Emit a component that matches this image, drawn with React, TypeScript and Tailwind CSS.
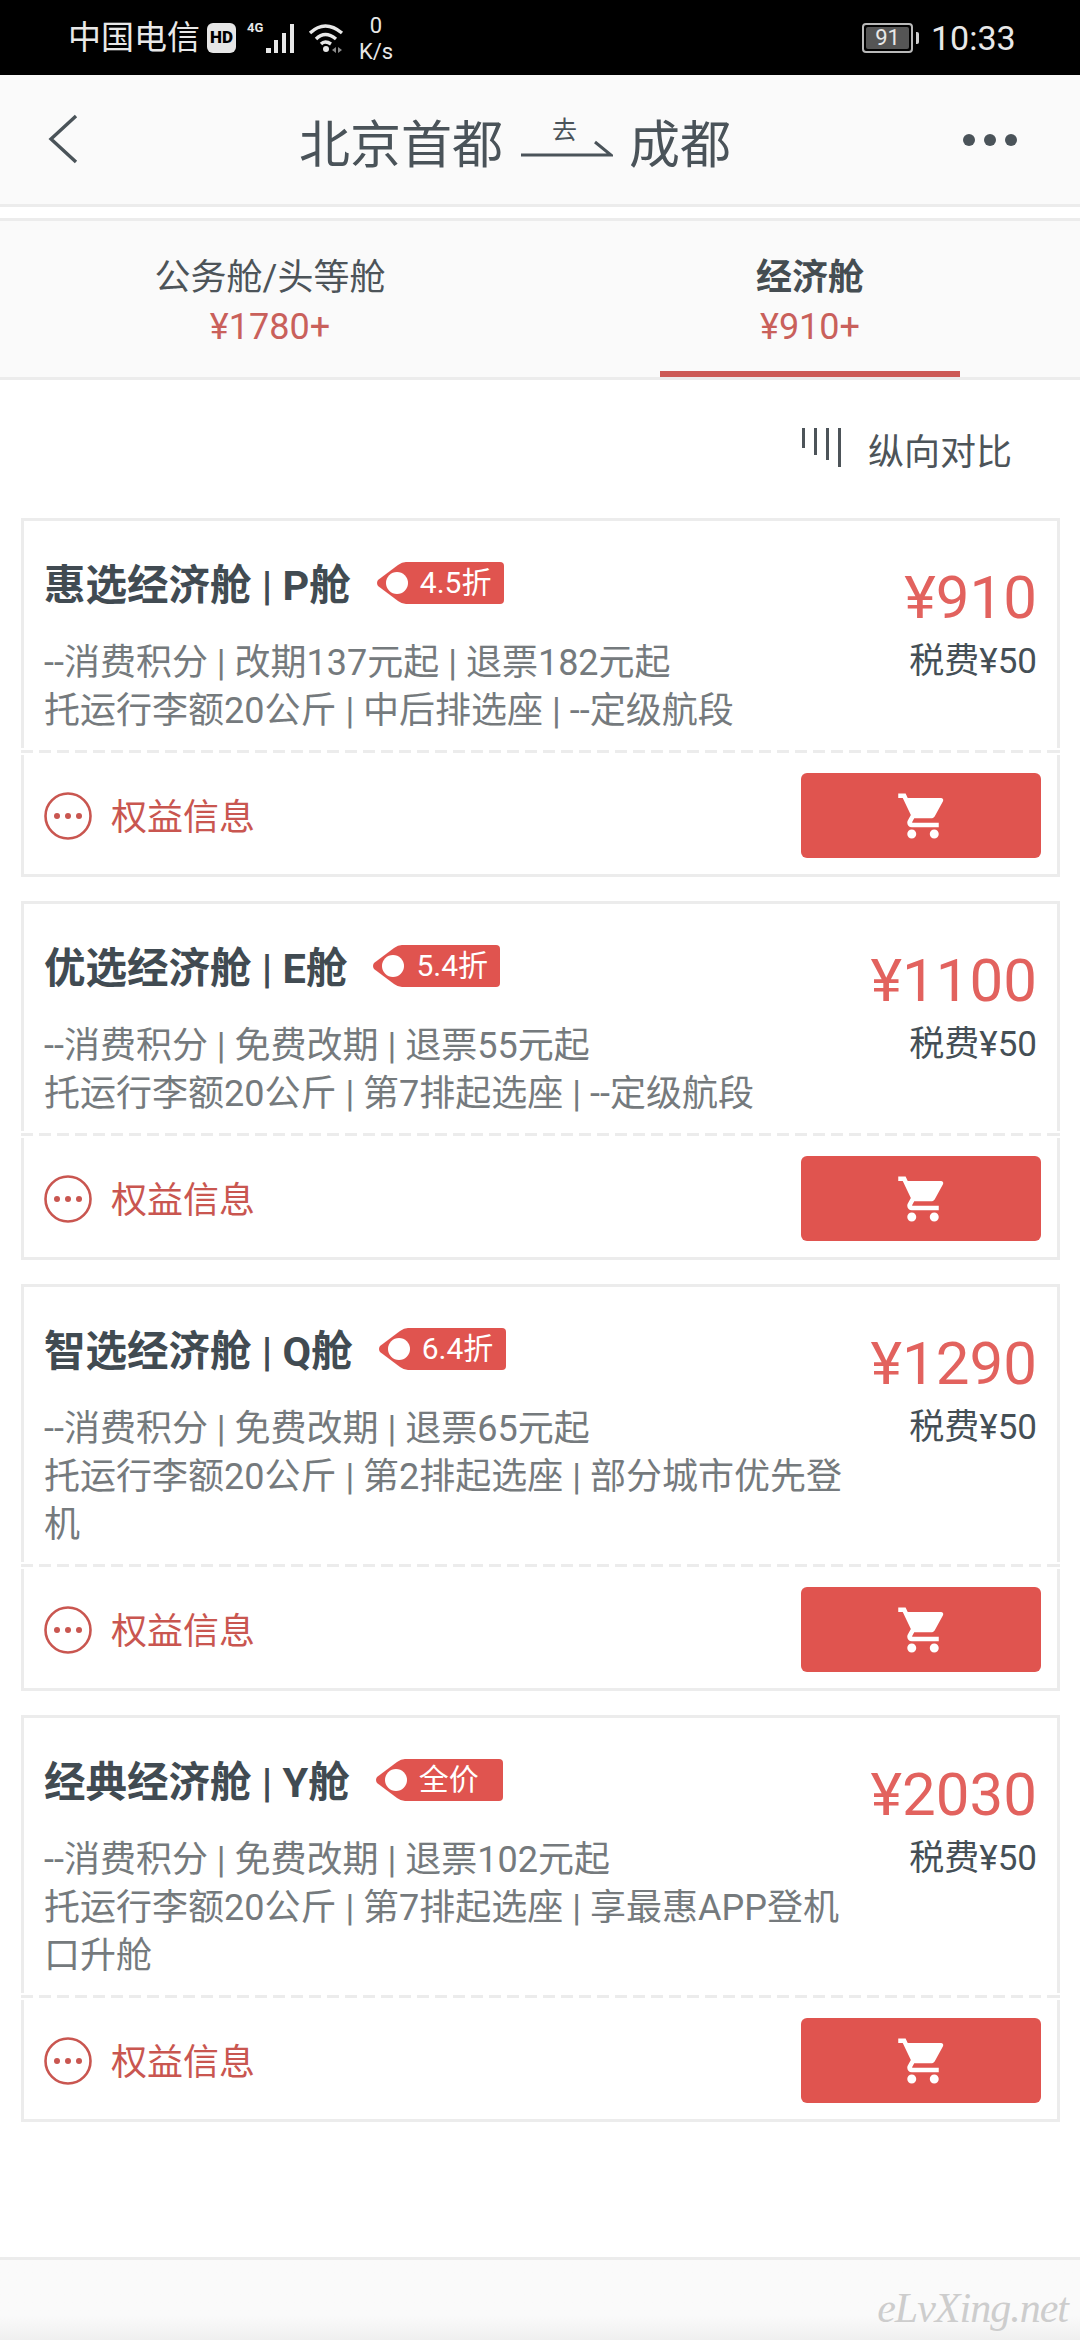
import { MdShoppingCart } from "react-icons/md";

type Cabin = {
  title: string;
  tag: string;
  price: string;
  lines: string;
};

const cabins: Cabin[] = [
  {
    title: "惠选经济舱 | P舱",
    tag: "4.5折",
    price: "¥910",
    lines: "--消费积分 | 改期137元起 | 退票182元起\n托运行李额20公斤 | 中后排选座 | --定级航段",
  },
  {
    title: "优选经济舱 | E舱",
    tag: "5.4折",
    price: "¥1100",
    lines: "--消费积分 | 免费改期 | 退票55元起\n托运行李额20公斤 | 第7排起选座 | --定级航段",
  },
  {
    title: "智选经济舱 | Q舱",
    tag: "6.4折",
    price: "¥1290",
    lines: "--消费积分 | 免费改期 | 退票65元起\n托运行李额20公斤 | 第2排起选座 | 部分城市优先登机",
  },
  {
    title: "经典经济舱 | Y舱",
    tag: "全价",
    price: "¥2030",
    lines: "--消费积分 | 免费改期 | 退票102元起\n托运行李额20公斤 | 第7排起选座 | 享最惠APP登机口升舱",
  },
];

function StatusBar() {
  return (
    <div className="flex h-[75px] shrink-0 items-center bg-black pl-[68px] text-[#e8e8e8]">
      <span className="text-[33px] leading-none">中国电信</span>
      <span className="ml-[7px] flex h-[30px] w-[29px] items-center justify-center rounded-[6px] bg-[#e6e6e6] text-[17px] font-black leading-none text-black">
        HD
      </span>
      {/* 4G + sinal */}
      <div className="relative ml-[11px] h-[30px] w-[52px]">
        <span className="absolute -top-[2px] left-0 text-[13px] font-bold leading-none">4G</span>
        <svg width="52" height="30" viewBox="0 0 52 30" fill="#e8e8e8">
          <rect x="19" y="25" width="5" height="5" />
          <rect x="27" y="17" width="4" height="13" />
          <rect x="35" y="10" width="4" height="20" />
          <rect x="43" y="1" width="4" height="29" />
        </svg>
      </div>
      {/* wifi */}
      <svg className="ml-[9px]" width="38" height="32" viewBox="0 0 38 32" fill="none" stroke="#e8e8e8" strokeWidth="3.4">
        <path d="M2 11 Q17 -3 34 11" />
        <path d="M8 17 Q17 8 28 17" />
        <path d="M13 22 Q17 18 23 22" />
        <circle cx="18" cy="27" r="3" fill="#e8e8e8" stroke="none" />
        <path d="M28 25 L24 28 L28 31 Z M30 25 L34 28 L30 31 Z" fill="#8a8a8a" stroke="none" />
      </svg>
      <div className="ml-[14px] flex w-[32px] flex-col items-center text-[22px] leading-[24px]">
        <span className="mt-[2px]">0</span>
        <span className="mt-[2px]">K/s</span>
      </div>
      {/* bateria */}
      <div className="ml-[470px] flex h-[30px] w-[51px] items-center justify-center rounded-[4px] border-2 border-[#b9b9b9] p-[2px]">
        <span className="flex h-full w-full items-center justify-center rounded-[2px] bg-[#555555] text-[22px] leading-none">
          91
        </span>
      </div>
      <span className="ml-[3px] h-[12px] w-[3px] rounded-r-[2px] bg-[#cfcfcf]" />
      <span className="ml-[12px] text-[34px] leading-none">10:33</span>
    </div>
  );
}

function Header() {
  return (
    <div className="flex h-[132px] shrink-0 items-center border-b-[3px] border-[#ececec] bg-[#fafafa] pl-[48px] pr-[63px] text-[#4a5359]">
      <svg className="mt-[-1px]" width="30" height="50" viewBox="0 0 30 50" fill="none" stroke="#4a5359" strokeWidth="3.4">
        <path d="M28 2 L3 25 L28 48" />
      </svg>
      <span className="ml-[221px] mt-[12px] text-[51px] leading-none">北京首都</span>
      {/* seta com o "去" em cima */}
      <div className="relative ml-[18px] mt-[3px] h-[36px] w-[92px]">
        <span className="absolute left-[31px] -top-[5px] text-[25px] leading-none">去</span>
        <svg className="absolute bottom-0 left-0" width="92" height="20" viewBox="0 0 92 20" fill="none" stroke="#4a5359" strokeWidth="3">
          <path d="M0 16 H90 L74 3" />
        </svg>
      </div>
      <span className="ml-[16px] mt-[12px] text-[51px] leading-none">成都</span>
      <div className="ml-auto flex gap-[9px]">
        <span className="h-[12px] w-[12px] rounded-full bg-[#4a5359]" />
        <span className="h-[12px] w-[12px] rounded-full bg-[#4a5359]" />
        <span className="h-[12px] w-[12px] rounded-full bg-[#4a5359]" />
      </div>
    </div>
  );
}

function Tabs() {
  return (
    <div className="mt-[11px] flex h-[162px] shrink-0 border-y-[3px] border-[#ececec] bg-[#fafafa]">
      <div className="flex w-[540px] flex-col items-center pt-[32px]">
        <span className="text-[36px] leading-[50px] text-[#4d5459]">公务舱/头等舱</span>
        <span className="text-[36px] leading-[48px] text-[#c9605b]">¥1780+</span>
      </div>
      <div className="flex w-[540px] flex-col items-center pt-[32px]">
        <span className="text-[36px] font-bold leading-[50px] text-[#454d52]">经济舱</span>
        <span className="text-[36px] leading-[48px] text-[#c9605b]">¥910+</span>
        <span className="mt-auto h-[6px] w-[300px] bg-[#cc5a56]" />
      </div>
    </div>
  );
}

function CompareRow() {
  return (
    <div className="flex h-[138px] shrink-0 justify-end pr-[68px] pt-[48px]">
      <svg width="40" height="40" viewBox="0 0 40 40" fill="#4d5459">
        <rect x="0" y="0" width="3" height="20" />
        <rect x="12" y="0" width="3" height="27" />
        <rect x="24" y="0" width="3" height="32" />
        <rect x="36" y="0" width="3" height="39" />
      </svg>
      <span className="ml-[26px] mt-[2px] text-[36px] leading-[46px] text-[#4d5459]">纵向对比</span>
    </div>
  );
}

function Tag({ text }: { text: string }) {
  return (
    <div className="relative ml-[25px] flex h-[42px] w-[128px] shrink-0 items-center pl-[44px]">
      <svg className="absolute inset-0" width="128" height="42" viewBox="0 0 128 42">
        <path
          d="M30 0 H124 a4 4 0 0 1 4 4 V38 a4 4 0 0 1 -4 4 H30 Q26 42 22 39 L2 24 Q0 21 2 18 L22 3 Q26 0 30 0 Z"
          fill="#e0544f"
        />
        <circle cx="21" cy="21" r="11" fill="#ffffff" />
      </svg>
      <span className="relative text-[30px] leading-none text-white">{text}</span>
    </div>
  );
}

function CabinCard({ cabin }: { cabin: Cabin }) {
  const [first, second] = cabin.lines.split("\n");
  return (
    <div className="border-[3px] border-[#ececec] bg-white">
      <div className="flex justify-between">
        <div className="w-[826px] pb-[15px] pl-[20px] pt-[32px]">
          <div className="flex h-[60px] items-center">
            <span className="mt-[5px] text-[41.5px] font-bold leading-none text-[#414b52]">{cabin.title}</span>
            <Tag text={cabin.tag} />
          </div>
          <div className="mt-[26px] text-[36px] leading-[48px] text-[#757a7d]">
            <div>{first}</div>
            <div>{second}</div>
          </div>
        </div>
        <div className="flex flex-col items-end pr-[20px] pt-[41px]">
          <span className="text-[60px] leading-[72px] text-[#e2625e]">{cabin.price}</span>
          <span className="mt-[4px] text-[35px] leading-[48px] text-[#454f56]">税费¥50</span>
        </div>
      </div>
      {/* tracejado corta a borda lateral do card */}
      <div className="relative -mx-[3px] -my-[2px] box-content h-[3px] border-y-2 border-white bg-[repeating-linear-gradient(90deg,#ececec_0,#ececec_12px,transparent_12px,transparent_18px)]" />
      <div className="flex items-center justify-between pb-[16px] pl-[20px] pr-[16px] pt-[20px]">
        <div className="flex items-center gap-[19px]">
          <svg width="48" height="48" viewBox="0 0 48 48" fill="#c95650">
            <circle cx="24" cy="24" r="22.5" fill="none" stroke="#c95650" strokeWidth="2.6" />
            <circle cx="13" cy="24" r="3" />
            <circle cx="24" cy="24" r="3" />
            <circle cx="35" cy="24" r="3" />
          </svg>
          <span className="mt-[4px] text-[36px] leading-none text-[#c95650]">权益信息</span>
        </div>
        <div className="flex h-[85px] w-[240px] items-center justify-center rounded-[6px] bg-[#e0544f] pl-[4px]">
          <MdShoppingCart className="h-[54px] w-[54px] text-white" />
        </div>
      </div>
    </div>
  );
}

export default function App() {
  return (
    <div className="relative flex h-[2340px] w-[1080px] flex-col overflow-hidden bg-white font-['Roboto','Noto_Sans_CJK_SC',sans-serif]">
      <StatusBar />
      <Header />
      <Tabs />
      <CompareRow />
      <div className="flex shrink-0 flex-col gap-[24px] pl-[21px] pr-[20px]">
        {cabins.map((c) => (
          <CabinCard key={c.title} cabin={c} />
        ))}
      </div>
      <div className="mt-auto h-[83px] shrink-0 border-t-[3px] border-[#ececec] bg-gradient-to-b from-[#fafafa] from-70% to-[#efefef]" />
      {/* marca d'água do site */}
      <span className="absolute bottom-[11px] right-[12px] font-['Liberation_Serif',serif] text-[42px] italic leading-none tracking-[-1px] text-[#cdcdcd]">
        eLvXing.net
      </span>
    </div>
  );
}
